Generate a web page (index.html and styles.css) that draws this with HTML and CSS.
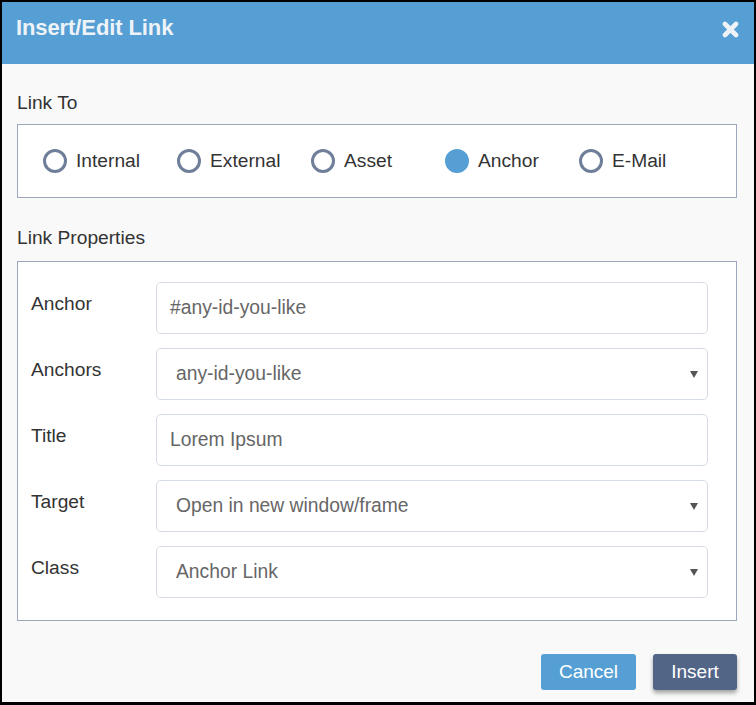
FILE: index.html
```html
<!DOCTYPE html>
<html lang="en">
<head>
<meta charset="utf-8">
<title>Insert/Edit Link</title>
<link rel="stylesheet" href="styles.css">
</head>
<body>
<div class="dialog">
  <header class="dialog-header">
    <h1 class="dialog-title">Insert/Edit Link</h1>
    <button class="close-btn" aria-label="Close">
      <svg width="17" height="17" viewBox="0 0 17 17"><path d="M3 3 L14 14 M14 3 L3 14" stroke="#eef3f8" stroke-width="4.6" stroke-linecap="round" fill="none"/></svg>
    </button>
  </header>
  <div class="dialog-body">
    <div class="section-label first">Link To</div>
    <div class="panel radio-panel">
      <label class="radio"><span class="circle"></span><span class="radio-text">Internal</span></label>
      <label class="radio"><span class="circle"></span><span class="radio-text">External</span></label>
      <label class="radio"><span class="circle"></span><span class="radio-text">Asset</span></label>
      <label class="radio"><span class="circle checked"></span><span class="radio-text">Anchor</span></label>
      <label class="radio"><span class="circle"></span><span class="radio-text">E-Mail</span></label>
    </div>
    <div class="section-label second">Link Properties</div>
    <div class="panel props-panel">
      <div class="row">
        <div class="row-label">Anchor</div>
        <div class="field input">#any-id-you-like</div>
      </div>
      <div class="row">
        <div class="row-label">Anchors</div>
        <div class="field select"><span>any-id-you-like</span><svg class="caret" width="8" height="7" viewBox="0 0 8 7"><polygon points="0,0 8,0 4,7" fill="#555"/></svg></div>
      </div>
      <div class="row">
        <div class="row-label">Title</div>
        <div class="field input">Lorem Ipsum</div>
      </div>
      <div class="row">
        <div class="row-label">Target</div>
        <div class="field select"><span>Open in new window/frame</span><svg class="caret" width="8" height="7" viewBox="0 0 8 7"><polygon points="0,0 8,0 4,7" fill="#555"/></svg></div>
      </div>
      <div class="row">
        <div class="row-label">Class</div>
        <div class="field select"><span>Anchor Link</span><svg class="caret" width="8" height="7" viewBox="0 0 8 7"><polygon points="0,0 8,0 4,7" fill="#555"/></svg></div>
      </div>
    </div>
    <div class="actions">
      <button class="btn btn-cancel">Cancel</button>
      <button class="btn btn-insert">Insert</button>
    </div>
  </div>
</div>
</body>
</html>
```
FILE: styles.css
```css
* { box-sizing: border-box; }
html, body { margin: 0; padding: 0; background: #000; }
body { font-family: "Liberation Sans", Arial, sans-serif; }

.dialog {
  width: 756px;
  height: 705px;
  border-style: solid;
  border-color: #000;
  border-width: 2px 2px 3px 2px;
  background: #f9f9f9;
  display: flex;
  flex-direction: column;
}

.dialog-header {
  height: 62px;
  background: #569fd4;
  display: flex;
  justify-content: space-between;
  align-items: flex-start;
  padding: 13px 15px 0 14px;
}
.dialog-title {
  margin: 0;
  font-size: 22px;
  line-height: 25px;
  font-weight: bold;
  color: #eef3f8;
  letter-spacing: -0.1px;
}
.close-btn {
  border: 0;
  padding: 0;
  margin-top: 6px;
  background: none;
  width: 17px;
  height: 17px;
  display: block;
}
.close-btn svg { display: block; }

.dialog-body {
  padding: 0 17px 0 15px;
  display: flex;
  flex-direction: column;
}

.section-label {
  font-size: 19.2px;
  line-height: 21px;
  color: #333;
}
.section-label.first { margin-top: 28px; margin-bottom: 11px; }
.section-label.second { margin-top: 29px; margin-bottom: 13px; }

.panel {
  background: #fff;
  border: 1px solid #9aa7bd;
}

.radio-panel {
  display: grid;
  grid-template-columns: repeat(5, 134px);
  padding: 24px 25px;
}
.radio {
  display: flex;
  align-items: center;
  height: 24px;
}
.circle {
  width: 24px;
  height: 24px;
  border-radius: 50%;
  border: 3px solid #6f7f99;
  flex: none;
}
.circle.checked {
  background: #569fd4;
  border-color: #569fd4;
}
.radio-text {
  margin-left: 9px;
  font-size: 19.2px;
  color: #333;
}

.props-panel {
  padding: 20px 28px 22px 13px;
  display: flex;
  flex-direction: column;
  gap: 14px;
}
.row {
  display: grid;
  grid-template-columns: 125px 1fr;
  align-items: start;
}
.row-label {
  font-size: 19.2px;
  line-height: 21px;
  color: #333;
  padding-top: 11px;
}
.field {
  height: 52px;
  border: 1px solid #d6dce5;
  border-radius: 5px;
  background: #fff;
  font-size: 19.3px;
  color: #666;
  display: flex;
  align-items: center;
}
.field.input { padding-left: 13px; }
.field.select {
  padding-left: 19px;
  padding-right: 9px;
  justify-content: space-between;
}
.caret { display: block; margin-top: 1px; }

.actions {
  margin-top: 33px;
  display: flex;
  justify-content: flex-end;
  gap: 17px;
}
.btn {
  height: 36px;
  border: 0;
  border-radius: 3px;
  color: #fff;
  font-family: "Liberation Sans", Arial, sans-serif;
  font-size: 19px;
  padding: 0;
}
.btn-cancel {
  width: 95px;
  background: #569fd4;
}
.btn-insert {
  width: 84px;
  background: #526587;
  box-shadow: 0 3px 4px rgba(0, 0, 0, 0.35);
}
```
